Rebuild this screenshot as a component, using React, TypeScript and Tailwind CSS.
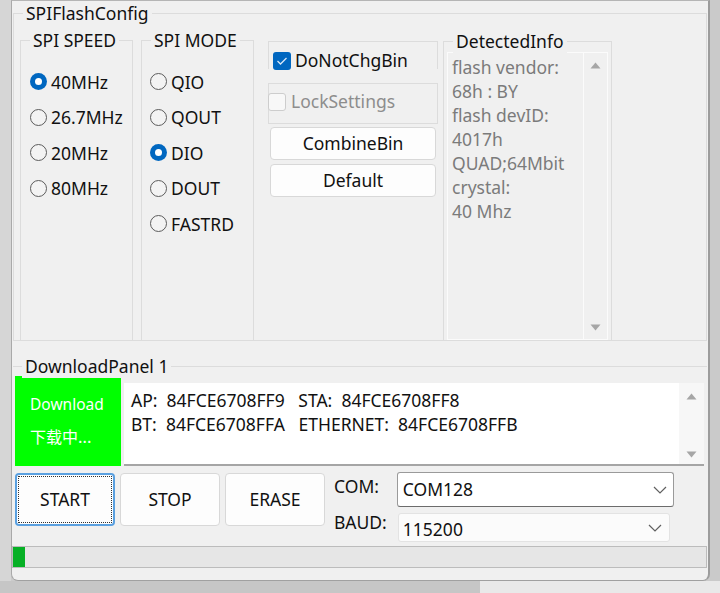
import React from "react";

const Up = () => (
  <svg width="11" height="7" viewBox="0 0 11 7"><polygon points="5.5,0.5 10.5,6.5 0.5,6.5" fill="#a6a6a6" /></svg>
);
const Down = () => (
  <svg width="11" height="7" viewBox="0 0 11 7"><polygon points="0.5,0.5 10.5,0.5 5.5,6.5" fill="#a6a6a6" /></svg>
);
const Chevron = () => (
  <svg width="14" height="8" viewBox="0 0 14 8"><polyline points="1,1 7,7 13,1" fill="none" stroke="#606060" strokeWidth="1.2" /></svg>
);

function Radio({ checked, label }: { checked?: boolean; label: string }) {
  return (
    <div className="flex items-center h-[35.5px]">
      {checked ? (
        <span className="w-[17px] h-[17px] rounded-full bg-[#0067c0] flex items-center justify-center">
          <span className="w-[7px] h-[7px] rounded-full bg-white" />
        </span>
      ) : (
        <span className="w-[17px] h-[17px] rounded-full border border-[#5c5c5c] bg-[#f3f3f3]" />
      )}
      <span className="ml-[4px] text-[17.5px] text-[#111]">{label}</span>
    </div>
  );
}

function Title({ children }: { children: React.ReactNode }) {
  return (
    <span className="absolute top-[-13px] left-[9px] px-[3px] bg-[#f0f0f0] leading-[24px] text-[17.5px] text-[#111] whitespace-nowrap">
      {children}
    </span>
  );
}

function Btn({ label, w, focus }: { label: string; w: string; focus?: boolean }) {
  return (
    <div
      className={`${w} h-[53px] rounded-[4px] bg-[#fdfdfd] flex items-center justify-center text-[17.5px] text-[#111] ${
        focus ? "border-2 border-[#5aa0e0] p-[1px]" : "border border-[#d8d8d8]"
      }`}
    >
      {focus ? (
        <div className="w-full h-full border border-dotted border-[#333] flex items-center justify-center">{label}</div>
      ) : (
        label
      )}
    </div>
  );
}

export default function App() {
  return (
    <div className="w-[720px] h-[593px] overflow-hidden flex flex-col bg-[#cbcbcb] font-['Noto_Sans',sans-serif]">
      <div className="flex h-[581px]">
        <div className="w-[11px] bg-[#d6d6d6]" />
        <div className="w-[699px] h-[581px] bg-[#f0f0f0] border-l border-t border-r-2 border-b border-l-[#a9a9a9] border-t-[#b5b5b5] border-r-[#9c9c9c] border-b-[#a0a0a0] rounded-b-[7px] flex flex-col">
          {/* SPIFlashConfig */}
          <div className="relative mt-[12px] ml-[1px] w-[694px] h-[328px] border border-[#dcdcdc] flex pl-[6px] pt-[26px]">
            <Title>SPIFlashConfig</Title>
            {/* SPI SPEED */}
            <div className="relative w-[113px] border-t border-l border-r border-[#dcdcdc] pl-[9px] pt-[23px]">
              <Title>SPI SPEED</Title>
              <Radio checked label="40MHz" />
              <Radio label="26.7MHz" />
              <Radio label="20MHz" />
              <Radio label="80MHz" />
            </div>
            {/* SPI MODE */}
            <div className="relative ml-[8px] w-[113px] border-t border-l border-r border-[#dcdcdc] pl-[8px] pt-[23px]">
              <Title>SPI MODE</Title>
              <Radio label="QIO" />
              <Radio label="QOUT" />
              <Radio checked label="DIO" />
              <Radio label="DOUT" />
              <Radio label="FASTRD" />
            </div>
            {/* checkbox column */}
            <div className="ml-[14px] w-[170px] flex flex-col">
              <div className="mt-[1px] h-[28px] border-t border-l border-r border-[#dcdcdc] pl-[4px] pt-[10px] flex items-start">
                <span className="w-[18px] h-[18px] rounded-[3px] bg-[#0067c0] flex items-center justify-center">
                  <svg width="12" height="10" viewBox="0 0 12 10"><polyline points="1.5,5 4.5,8 10.5,2" fill="none" stroke="#d9e8f7" strokeWidth="1.3" /></svg>
                </span>
                <span className="ml-[4px] mt-[-4px] text-[17.5px] text-[#111] leading-[24px]">DoNotChgBin</span>
              </div>
              <div className="mt-[14px] h-[41px] border border-[#dcdcdc] flex items-start pt-[9px]">
                <span className="ml-[-1px] w-[18px] h-[18px] rounded-[3px] border border-[#cdcdcd] bg-[#f8f8f8]" />
                <span className="ml-[5px] mt-[-4px] leading-[24px] text-[17.5px] text-[#8d8d8d]">LockSettings</span>
              </div>
              <div className="mt-[3px] mx-[2px] h-[33px] rounded-[4px] border border-[#d8d8d8] bg-[#fdfdfd] flex items-center justify-center text-[17.5px] text-[#111]">
                CombineBin
              </div>
              <div className="mt-[4px] mx-[2px] h-[33px] rounded-[4px] border border-[#d8d8d8] bg-[#fdfdfd] flex items-center justify-center text-[17.5px] text-[#111]">
                Default
              </div>
            </div>
            {/* DetectedInfo */}
            <div className="relative ml-[5px] mt-[1px] w-[169px] border-t border-l border-r border-[#dcdcdc] flex flex-col">
              <Title>DetectedInfo</Title>
              <div className="mt-[10px] mx-[3px] flex-1 border border-[#fbfbfb] flex">
                <div className="flex-1 pl-[4px] pt-[2px] text-[17.5px] leading-[24px] text-[#7b7b7b]">
                  <div>flash vendor:</div>
                  <div>68h : BY</div>
                  <div>flash devID:</div>
                  <div>4017h</div>
                  <div>QUAD;64Mbit</div>
                  <div>crystal:</div>
                  <div>40 Mhz</div>
                </div>
                <div className="w-[24px] border-l border-[#fbfbfb] flex flex-col items-center justify-between pt-[9px] pb-[8px]">
                  <Up />
                  <Down />
                </div>
              </div>
            </div>
          </div>

          {/* DownloadPanel */}
          <div className="relative mt-[25px] ml-[1px] w-[694px] border-t border-[#dcdcdc]">
            <Title>DownloadPanel 1</Title>
          </div>
          <div className="mt-[9px] flex items-start">
            <div className="ml-[3px] w-[106px] h-[90px] bg-[#00ff00] text-white leading-[32px] pl-[15px] pt-[12px]">
              <div className="text-[15.5px]">Download</div>
              <div className="text-[16px] font-['Noto_Sans_CJK_SC','Noto_Sans',sans-serif]">下载中...</div>
            </div>
            <div className="ml-[3px] mt-[7px] w-[580px] h-[83px] bg-white border-b-2 border-[#a5a5a5] flex">
              <div className="flex-1 pl-[7px] pt-[5px] text-[17.5px] leading-[24px] text-[#111] whitespace-pre">
                <div>AP:  84FCE6708FF9   STA:  84FCE6708FF8</div>
                <div>BT:  84FCE6708FFA   ETHERNET:  84FCE6708FFB</div>
              </div>
              <div className="w-[25px] bg-[#f7f7f7] flex flex-col items-center justify-between pt-[10px] pb-[6px]">
                <Up />
                <Down />
              </div>
            </div>
          </div>

          {/* Buttons row */}
          <div className="mt-[6px] flex items-start">
            <div className="ml-[3px] mt-[1px] flex gap-[5px]">
              <Btn label="START" w="w-[100px]" focus />
              <Btn label="STOP" w="w-[100px]" />
              <Btn label="ERASE" w="w-[100px]" />
            </div>
            <div className="ml-[9px] flex flex-col text-[17.5px] text-[#111]">
              <div className="h-[35px] flex items-center mt-[-3px]">COM:</div>
              <div className="h-[35px] flex items-center mt-[1px]">BAUD:</div>
            </div>
            <div className="ml-[10px] flex flex-col">
              <div className="w-[277px] h-[35px] rounded-[3px] border border-[#9a9a9a] border-b-[#6c6c6c] bg-white flex items-center justify-between pl-[5px] pr-[6px] text-[17.5px] text-[#111]">
                <span>COM128</span>
                <Chevron />
              </div>
              <div className="mt-[6px] ml-[1px] w-[272px] h-[29px] rounded-[3px] border border-[#e3e3e3] bg-[#fbfbfb] flex items-center justify-between pl-[4px] pr-[7px] text-[17.5px] text-[#111]">
                <span className="mt-[4px]">115200</span>
                <Chevron />
              </div>
            </div>
          </div>

          {/* progress */}
          <div className="mt-[4px] w-[695px] h-[22px] border border-[#bcbcbc] bg-[#e6e6e6] flex">
            <div className="w-[12px] h-full bg-[#06b025]" />
          </div>
        </div>
        <div className="w-[10px] bg-[#cacaca]" />
      </div>
      <div className="flex flex-1">
        <div className="w-[480px] bg-[#c6c6c6]" />
        <div className="flex-1 bg-[#e9e9e9]" />
      </div>
    </div>
  );
}
